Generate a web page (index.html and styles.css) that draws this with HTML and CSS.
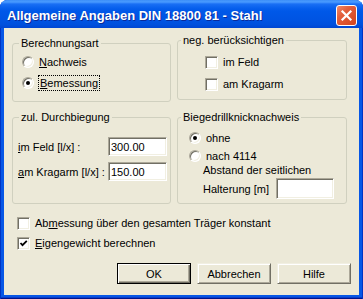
FILE: index.html
```html
<!DOCTYPE html>
<html lang="de">
<head>
    <meta charset="UTF-8">
    <title>Allgemeine Angaben DIN 18800 81 - Stahl</title>
    <link rel="stylesheet" href="styles.css">
</head>
<body>
    <div class="window">
        <div class="titlebar">
            <span class="title">Allgemeine Angaben DIN 18800 81 - Stahl</span>
            <span class="close">
                <svg width="19" height="19" viewBox="0 0 19 19">
                    <path d="M5.5 5.5 L13.5 13.5 M13.5 5.5 L5.5 13.5" stroke="#fff" stroke-width="2.2" stroke-linecap="square"/>
                </svg>
            </span>
        </div>
        <div class="client">
            <div class="groups">
                <fieldset class="group g-art">
                    <legend>Berechnungsart</legend>
                    <div class="body">
                        <div class="opt"><span class="radio"></span><span class="txt"><u>N</u>achweis</span></div>
                        <div class="opt"><span class="radio on"></span><span class="txt focus"><u>B</u>emessung</span></div>
                    </div>
                </fieldset>
                <fieldset class="group g-neg right">
                    <legend>neg. berücksichtigen</legend>
                    <div class="body">
                        <div class="opt"><span class="check"></span><span class="txt">im Feld</span></div>
                        <div class="opt"><span class="check"></span><span class="txt">am Kragarm</span></div>
                    </div>
                </fieldset>
                <fieldset class="group g-durch">
                    <legend>zul. Durchbiegung</legend>
                    <div class="body">
                        <div class="field"><span class="lbl"><u>i</u>m Feld [l/x] :</span><input class="edit" type="text" value="300.00"></div>
                        <div class="field"><span class="lbl"><u>a</u>m Kragarm [l/x] :</span><input class="edit" type="text" value="150.00"></div>
                    </div>
                </fieldset>
                <fieldset class="group g-bdk right">
                    <legend>Biegedrillknicknachweis</legend>
                    <div class="body">
                        <div class="opt"><span class="radio on"></span><span class="txt">ohne</span></div>
                        <div class="opt"><span class="radio"></span><span class="txt">nach 4114</span></div>
                        <div class="note">Abstand der seitlichen</div>
                        <div class="halt"><span class="halt-lbl">Halterung [m]</span><input class="edit wide" type="text" value=""></div>
                    </div>
                </fieldset>
            </div>

            <div class="checks">
                <div class="opt"><span class="check"></span><span class="txt">Ab<u>m</u>essung über den gesamten Träger konstant</span></div>
                <div class="opt"><span class="check on">
                    <svg width="9" height="9" viewBox="0 0 9 9"><path d="M1.5 4 L3.5 6.2 L7.8 1.8" fill="none" stroke="#000" stroke-width="1.8"/></svg>
                </span><span class="txt"><u>E</u>igengewicht berechnen</span></div>
            </div>

            <div class="buttons">
                <button class="btn default">OK</button>
                <button class="btn">Abbrechen</button>
                <button class="btn">Hilfe</button>
            </div>
        </div>
    </div>
</body>
</html>
```

FILE: styles.css
```css
* {
    box-sizing: border-box;
}
body {
    margin: 0;
    background: #fff;
    font-family: "Liberation Sans", Arial, sans-serif;
    font-size: 11px;
    color: #000;
}
.window {
    width: 363px;
    height: 299px;
    display: flex;
    flex-direction: column;
    background: #0757E6;
    border-radius: 8px 8px 0 0;
    box-shadow: inset 1px 0 #0034C4, inset -1px 0 #0034C4, inset 0 -1px #00138C, inset 0 -2px #0A3CC8;
}
.titlebar {
    height: 28px;
    display: flex;
    align-items: center;
    justify-content: space-between;
    padding: 3px 6px 0 7px;
    border-radius: 7px 7px 0 0;
    background: linear-gradient(#3C8EF8 0, #4A9BFF 2px, #1A6FF4 4px, #0860ED 8px, #0058E8 40%, #0054E3 70%, #0050DD 88%, #0046D2 100%);
}
.title {
    color: #fff;
    font-weight: bold;
    font-size: 13px;
    text-shadow: 1px 1px #0A2A9A;
    white-space: nowrap;
}
.close {
    width: 21px;
    height: 21px;
    display: flex;
    align-items: center;
    justify-content: center;
    border: 1px solid #fff;
    border-radius: 3px;
    background: linear-gradient(135deg, #F08A6A 0, #E35F3C 35%, #D2441F 100%);
}
.client {
    flex: 1;
    margin: 0 4px 4px;
    background: #ECE9D8;
    padding: 6px 8px 0 8px;
}
.groups {
    display: grid;
    grid-template-columns: 159px 170px;
    column-gap: 6px;
    row-gap: 9px;
    align-items: start;
}
.group {
    margin: 0;
    padding: 0;
    border: 1px solid #D0D0BF;
    border-radius: 3px;
    min-width: 0;
}
.group legend {
    margin-left: 6px;
    padding: 0 2px;
    line-height: 13px;
}
.group.right legend {
    margin-left: 3px;
}
.opt {
    display: flex;
    align-items: center;
    height: 16px;
    line-height: 13px;
    white-space: nowrap;
}
.txt {
    margin-left: 5px;
}
.focus {
    margin-left: 4px;
    padding: 0 1px;
    line-height: 14px;
    border: 1px dotted #000;
}
.radio {
    width: 12px;
    height: 12px;
    flex: none;
    border-radius: 50%;
    background: #fff;
    border: 1px solid;
    border-color: #ACA899 #fff #fff #ACA899;
    box-shadow: inset 1px 1px #716F64, inset -1px -1px #F1EFE2;
    display: flex;
    align-items: center;
    justify-content: center;
}
.radio.on::after {
    content: "";
    width: 4px;
    height: 4px;
    border-radius: 50%;
    background: #000;
}
.check {
    width: 13px;
    height: 13px;
    flex: none;
    background: #fff;
    border: 1px solid;
    border-color: #ACA899 #fff #fff #ACA899;
    box-shadow: inset 1px 1px #716F64, inset -1px -1px #F1EFE2;
    display: flex;
    align-items: center;
    justify-content: center;
}
.check svg {
    display: block;
}

.g-art {
    margin-top: 3px;
    height: 65px;
}
.g-art .body {
    padding: 4px 0 0 9px;
}
.g-art .opt + .opt {
    margin-top: 5px;
}
.g-neg {
    height: 66px;
}
.g-neg .body {
    padding: 7px 0 0 27px;
}
.g-neg .opt + .opt {
    margin-top: 6px;
}
.g-durch {
    height: 93px;
}
.g-durch .body {
    padding: 13px 3px 0 5px;
}
.field {
    display: flex;
    align-items: center;
    height: 19px;
}
.field + .field {
    margin-top: 6px;
}
.lbl {
    flex: 1;
    white-space: nowrap;
}
.edit {
    width: 59px;
    height: 19px;
    margin: 0;
    padding: 0 2px;
    font: inherit;
    color: #000;
    background: #fff;
    border: 1px solid;
    border-color: #ACA899 #fff #fff #ACA899;
    box-shadow: inset 1px 1px #716F64, inset -1px -1px #F1EFE2;
    outline: none;
}
.edit.wide {
    width: 58px;
    height: 21px;
}
.g-bdk {
    height: 93px;
}
.g-bdk .body {
    padding: 6px 0 0 11px;
}
.g-bdk .opt + .opt {
    margin-top: 2px;
}
.note {
    padding-left: 14px;
    line-height: 13px;
    white-space: nowrap;
}
.halt {
    display: flex;
    align-items: center;
    padding-left: 14px;
    margin-top: 1px;
}
.halt-lbl {
    width: 73px;
    white-space: nowrap;
}
.checks {
    margin-top: 13px;
    padding-left: 5px;
}
.checks .opt {
    height: 13px;
}
.checks .opt + .opt {
    margin-top: 7px;
}
.buttons {
    display: flex;
    justify-content: flex-end;
    gap: 6px;
    margin-top: 13px;
}
.btn {
    width: 74px;
    height: 21px;
    margin: 0;
    padding: 0;
    font: inherit;
    color: #000;
    background: #ECE9D8;
    border: 1px solid;
    border-color: #F1EFE2 #716F64 #716F64 #F1EFE2;
    box-shadow: inset 1px 1px #fff, inset -1px -1px #ACA899;
}
.btn.default {
    border-color: #000;
    box-shadow: inset 1px 1px #fff, inset -1px -1px #716F64, inset -2px -2px #ACA899;
}
```
